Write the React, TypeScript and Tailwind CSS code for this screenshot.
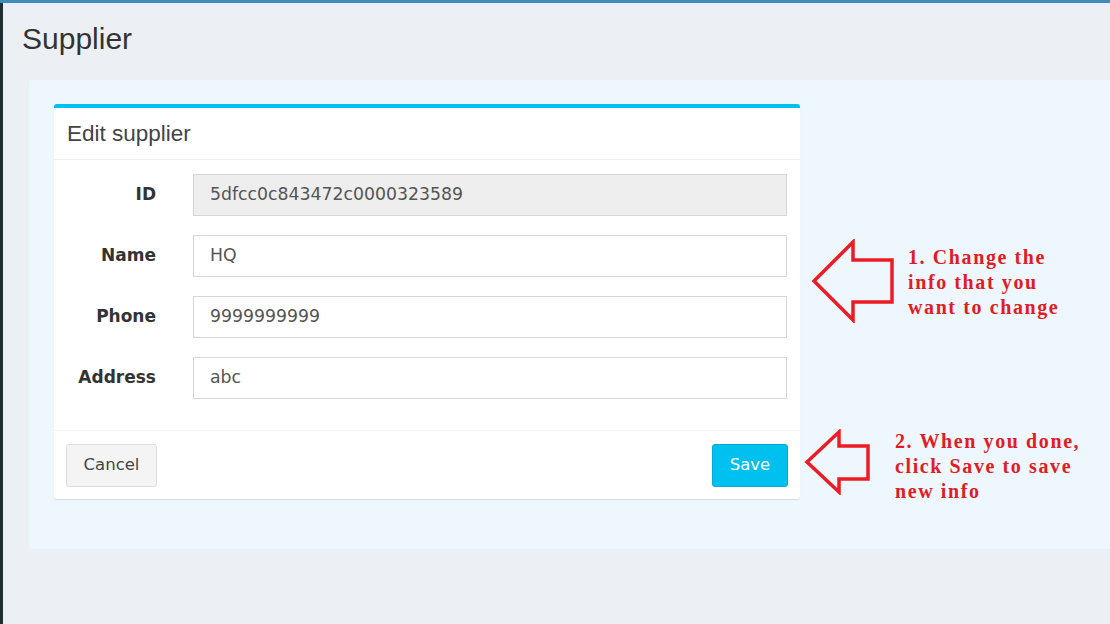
import React from "react"

const fields = [
  { label: "ID", value: "5dfcc0c843472c0000323589", disabled: true },
  { label: "Name", value: "HQ" },
  { label: "Phone", value: "9999999999" },
  { label: "Address", value: "abc" },
]

function Arrow({ w, h, shaftTop, shaftBottom, headW }: { w: number; h: number; shaftTop: number; shaftBottom: number; headW: number }) {
  const mid = h / 2
  return (
    <svg width={w} height={h} viewBox={`0 0 ${w} ${h}`} className="block">
      <polygon
        points={`3,${mid} ${headW},3 ${headW},${shaftTop} ${w - 2},${shaftTop} ${w - 2},${shaftBottom} ${headW},${shaftBottom} ${headW},${h - 3} 3,${mid}`}
        fill="none"
        stroke="#ed1c24"
        strokeWidth="3.5"
        strokeLinejoin="miter"
      />
    </svg>
  )
}

export default function App() {
  return (
    <div className="w-[1110px] h-[624px] overflow-hidden bg-[#ecf0f5] flex flex-col">
      <div className="h-[3px] bg-[#3c8dbc]" />
      <div className="flex flex-1">
        <div className="w-[3px] bg-[#222d32]" />
        <div className="flex-1 pl-[19px]">
          <h1 className="mt-[19px] text-[30px] leading-[34px] text-[#333] font-['Liberation_Sans',Arial,sans-serif]">Supplier</h1>
          <div className="mt-[24px] ml-[7px] h-[469px] bg-[#edf7fd] rounded-l-[3px] pl-[25px] pt-[24px]">
            <div className="flex items-start">
              <div className="w-[746px] bg-white border-t-[4px] border-[#00c0ef] rounded-[3px] shadow-[0_1px_1px_rgba(0,0,0,0.1)]">
                <div className="h-[52px] px-[13px] flex items-center border-b border-[#f0f0f0]">
                  <span className="text-[22.5px] text-[#444] font-['Liberation_Sans',Arial,sans-serif]">Edit supplier</span>
                </div>
                <div className="pt-[14px] pb-[31px] flex flex-col gap-[19px] font-['DejaVu_Sans',Verdana,sans-serif]">
                  {fields.map((f) => (
                    <div key={f.label} className="flex items-center">
                      <label className="w-[102px] text-right text-[17px] font-bold text-[#333]">{f.label}</label>
                      <div
                        className={`ml-[37px] w-[594px] h-[42px] border border-[#d2d6de] flex items-center pl-[16px] text-[17.3px] text-[#555] ${f.disabled ? "bg-[#eeeeee]" : "bg-white"}`}
                      >
                        {f.value}
                      </div>
                    </div>
                  ))}
                </div>
                <div className="border-t border-[#f4f4f4] h-[69px] px-[12px] flex items-center justify-between font-['DejaVu_Sans',Verdana,sans-serif]">
                  <button className="w-[91px] h-[43px] bg-[#f4f4f4] border border-[#ddd] rounded-[3px] text-[16.5px] text-[#444]">Cancel</button>
                  <button className="w-[76px] h-[43px] bg-[#00c0ef] border border-[#00acd6] rounded-[3px] text-[16.5px] text-white">Save</button>
                </div>
              </div>
              <div className="flex flex-col">
                <div className="mt-[135px] ml-[11px] flex items-start">
                  <Arrow w={83} h={84} headW={42} shaftTop={21} shaftBottom={63} />
                  <p className="ml-[14px] mt-[6px] text-[20px] leading-[25px] tracking-[1.6px] font-bold text-[#e31b23] font-['Liberation_Serif','Times_New_Roman',serif]">
                    1. Change the<br />info that you<br />want to change
                  </p>
                </div>
                <div className="mt-[106px] ml-[4px] flex items-start">
                  <Arrow w={66} h={66} headW={35} shaftTop={17} shaftBottom={50} />
                  <p className="ml-[25px] mt-[0px] text-[20px] leading-[25px] tracking-[1.6px] font-bold text-[#e31b23] font-['Liberation_Serif','Times_New_Roman',serif]">
                    2. When you done,<br />click Save to save<br />new info
                  </p>
                </div>
              </div>
            </div>
          </div>
        </div>
      </div>
    </div>
  )
}
